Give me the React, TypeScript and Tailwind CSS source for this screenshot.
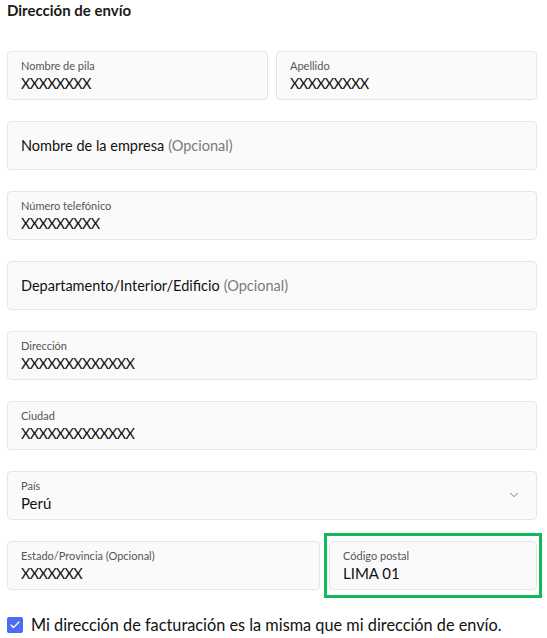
import React from 'react';
import { ChevronDown, Check } from 'lucide-react';

const font = { fontFamily: 'Lato, "Noto Sans", sans-serif' };

interface FieldProps {
  label: string;
  value: string;
  tight?: boolean;
}

const Field: React.FC<FieldProps> = ({ label, value, tight }) => (
  <div className="h-[49px] rounded-[4px] border border-[#e6e6e6] bg-[#fafafa] px-[13px] pt-[7px]">
    <div className="text-[11px] leading-[14px] text-[#555]">{label}</div>
    <div
      className={
        'mt-[1px] leading-[19px] text-[#111] ' +
        (tight ? 'text-[14.5px] tracking-[-0.7px]' : 'text-[15px]')
      }
    >
      {value}
    </div>
  </div>
);

const Placeholder: React.FC<{ text: string }> = ({ text }) => (
  <div className="flex h-[49px] items-center rounded-[4px] border border-[#e6e6e6] bg-[#fafafa] px-[13px] text-[14.5px] text-[#111]">
    {text}
    <span className="ml-[4px] text-[#7a7a7a]">(Opcional)</span>
  </div>
);

export default function App() {
  return (
    <div className="w-[547px] bg-white px-[7px] pt-[1px]" style={font}>
      <h2 className="text-[15px] font-bold leading-[18px] text-[#1a1a1a]">Dirección de envío</h2>

      <div className="mt-[32px] flex w-[530px] flex-col gap-[21px]">
        <div className="grid grid-cols-2 gap-[8px]">
          <Field label="Nombre de pila" value="XXXXXXXX" tight />
          <Field label="Apellido" value="XXXXXXXXX" tight />
        </div>
        <Placeholder text="Nombre de la empresa" />
        <Field label="Número telefónico" value="XXXXXXXXX" tight />
        <Placeholder text="Departamento/Interior/Edificio" />
        <Field label="Dirección" value="XXXXXXXXXXXXX" tight />
        <Field label="Ciudad" value="XXXXXXXXXXXXX" tight />
        <div className="relative">
          <Field label="País" value="Perú" />
          <ChevronDown size={14} strokeWidth={1.5} className="absolute right-[16px] top-[17px] text-[#666]" />
        </div>
        <div className="grid grid-cols-[313px_1fr] gap-[9px]">
          <Field label="Estado/Provincia (Opcional)" value="XXXXXXX" tight />
          <div className="relative">
            <Field label="Código postal" value="LIMA 01" />
            <div className="pointer-events-none absolute -inset-x-[5px] -bottom-[8px] -top-[8px] border-[3px] border-[#12b85a]" />
          </div>
        </div>
      </div>

      <label className="mt-[23px] flex items-center gap-[8px] text-[16.3px] text-[#111]">
        <span className="flex h-[16px] w-[16px] items-center justify-center rounded-[2px] bg-[#4a6cf0]">
          <Check size={12} strokeWidth={2.5} className="text-white" />
        </span>
        Mi dirección de facturación es la misma que mi dirección de envío.
      </label>
    </div>
  );
}
